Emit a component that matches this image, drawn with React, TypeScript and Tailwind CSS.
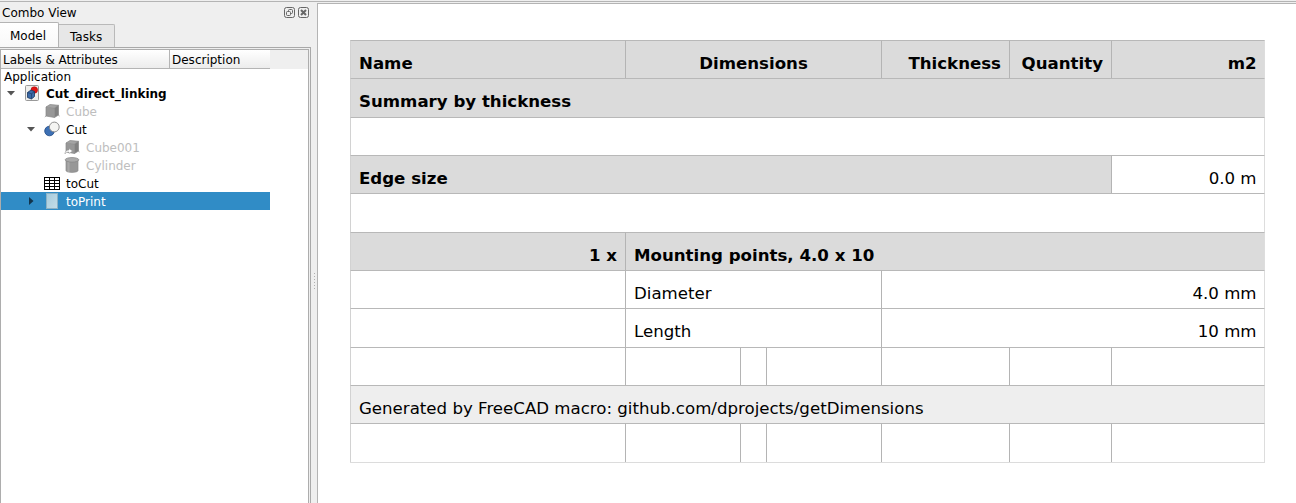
import type { ReactNode } from "react";

type Cell = { w: string; text?: string; cls?: string };
type Row = { h: string; cls: string; cells: Cell[] };

const head = "bg-[#dbdbdb] font-bold";
const plain = "bg-white";
const foot = "bg-[#eeeeee] border-b border-b-[#dedede]";

const emptyCells: Cell[] = [
  { w: "w-[275px]" },
  { w: "w-[115px]" },
  { w: "w-[26px]" },
  { w: "w-[115px]" },
  { w: "w-[128px]" },
  { w: "w-[102px]" },
  { w: "w-[154px]" },
];

const rows: Row[] = [
  {
    h: "h-[38px]",
    cls: head,
    cells: [
      { w: "w-[275px]", text: "Name" },
      { w: "w-[256px]", text: "Dimensions", cls: "justify-center" },
      { w: "w-[128px]", text: "Thickness", cls: "justify-end" },
      { w: "w-[102px]", text: "Quantity", cls: "justify-end" },
      { w: "w-[154px]", text: "m2", cls: "justify-end" },
    ],
  },
  { h: "h-[39px]", cls: head, cells: [{ w: "w-[915px]", text: "Summary by thickness" }] },
  { h: "h-[38px]", cls: plain, cells: [{ w: "w-[915px]" }] },
  {
    h: "h-[38px]",
    cls: plain,
    cells: [
      { w: "w-[761px]", text: "Edge size", cls: "bg-[#dbdbdb] font-bold" },
      { w: "w-[154px]", text: "0.0 m", cls: "justify-end" },
    ],
  },
  { h: "h-[39px]", cls: plain, cells: [{ w: "w-[915px]" }] },
  {
    h: "h-[38px]",
    cls: head,
    cells: [
      { w: "w-[275px]", text: "1 x", cls: "justify-end" },
      { w: "w-[640px]", text: "Mounting points, 4.0 x 10" },
    ],
  },
  {
    h: "h-[38px]",
    cls: plain,
    cells: [
      { w: "w-[275px]" },
      { w: "w-[256px]", text: "Diameter" },
      { w: "w-[384px]", text: "4.0 mm", cls: "justify-end" },
    ],
  },
  {
    h: "h-[39px]",
    cls: plain,
    cells: [
      { w: "w-[275px]" },
      { w: "w-[256px]", text: "Length" },
      { w: "w-[384px]", text: "10 mm", cls: "justify-end" },
    ],
  },
  { h: "h-[38px]", cls: plain, cells: emptyCells },
  {
    h: "h-[39px]",
    cls: foot,
    cells: [{ w: "w-[915px]", text: "Generated by FreeCAD macro: github.com/dprojects/getDimensions" }],
  },
  { h: "h-[40px] -mt-px", cls: "border-b border-b-[#dcdcdc]", cells: emptyCells },
];

function Report() {
  return (
    <div className="w-[915px] text-[16.61px] leading-[20px] text-black">
      {rows.map((row, i) => (
        <div key={i} className={`flex ${row.h} ${row.cls}`}>
          {row.cells.map((c, j) => {
            const last = j === row.cells.length - 1;
            return (
              <div
                key={j}
                className={`flex items-start whitespace-nowrap border-t border-l border-t-[#b8b8b8] pt-[13px] pl-2 ${c.w} ${c.cls ?? ""} ${
                  j === 0 ? "border-l-[#d2d2d2]" : "border-l-[#b4b4b4]"
                } ${last ? "border-r border-r-[#dddddd] pr-[7.5px]" : "pr-2"}`}
              >
                {c.text}
              </div>
            );
          })}
        </div>
      ))}
    </div>
  );
}

function DocIcon() {
  return (
    <svg width="16" height="16" viewBox="0 0 16 16">
      <rect x="1.5" y="0.5" width="13" height="15" rx="1" fill="#eeeeec" stroke="#999" />
      <circle cx="10.300" cy="5" r="3.300" fill="#e01515" stroke="#a40000" strokeWidth=".5" />
      <path d="M3.500 7.500 7 5l3.500 1.500v5L7.500 14l-4-1.500z" fill="#3b6aa8" stroke="#17365f" strokeWidth=".8" />
      <path d="m3.500 7.500 4 1.300 3-2.300M7.500 8.800V14" fill="none" stroke="#17365f" strokeWidth=".6" />
    </svg>
  );
}

function CubeIcon({ link = false }: { link?: boolean }) {
  return (
    <svg width="16" height="16" viewBox="0 0 16 16">
      <path d="M2 4 6 1.500l8.500.8L11 5z" fill="#a4a4a4" />
      <path d="M2 4 10.500 5v9.500L2 13z" fill="#979797" />
      <path d="M10.500 5 14.500 2.300V12l-4 2.500z" fill="#808080" />
      <path d="M2 4 6 1.500l8.500.8V12l-4 2.500L2 13zM2 4l8.500 1 4-2.700M10.500 5v9.500M2 13l-1.200 1M14.500 12l.8 1.300" fill="none" stroke="#868686" strokeWidth=".7" />
      {link && <path d="M1 15c0-3 2-4 4-4V9.500L8.500 12 5 14.500V13c-2 0-3 .5-4 2z" fill="#fff" stroke="#999" strokeWidth=".5" />}
    </svg>
  );
}

function CutIcon() {
  return (
    <svg width="16" height="16" viewBox="0 0 16 16">
      <circle cx="5.500" cy="10" r="4.800" fill="#3d70b4" stroke="#204a87" strokeWidth=".8" />
      <circle cx="10.300" cy="6" r="4.900" fill="#f5f5f3" stroke="#858585" strokeWidth=".9" />
    </svg>
  );
}

function CylinderIcon() {
  return (
    <svg width="16" height="16" viewBox="0 0 16 16">
      <path d="M2 3v10.500c0 2.500 12 2.500 12 0V3z" fill="#979797" stroke="#8a8a8a" strokeWidth=".7" />
      <path d="M4.500 5v10" stroke="#a8a8a8" strokeWidth="2" />
      <ellipse cx="8" cy="2.800" rx="6.800" ry="2.300" fill="#aaaaaa" stroke="#858585" strokeWidth=".7" />
    </svg>
  );
}

function SheetIcon() {
  return (
    <svg width="16" height="16" viewBox="0 0 16 16" shapeRendering="crispEdges">
      <rect x="0" y="2" width="16" height="13" fill="#000" />
      <g fill="#fff">
        {[3, 6, 9, 12].map((y) =>
          [1, 6, 11].map((x) => <rect key={`${x}-${y}`} x={x} y={y} width="4" height="2" />),
        )}
      </g>
    </svg>
  );
}

function PageIcon() {
  return (
    <svg width="16" height="16" viewBox="0 0 16 16">
      <defs>
        <linearGradient id="page" x1="0" y1="0" x2="1" y2="1">
          <stop offset="0" stopColor="#a5cbdd" />
          <stop offset="1" stopColor="#c4dde7" />
        </linearGradient>
      </defs>
      <rect x="2.500" y="0.500" width="11" height="15" fill="url(#page)" stroke="#8bb1c4" />
    </svg>
  );
}

function Arrow({ open }: { open: boolean }) {
  return (
    <svg width="10" height="10" viewBox="0 0 10 10">
      <path d={open ? "M1 3h8L5 7.500z" : "M3 1v8l4.500-4z"} fill={open ? "#555" : "#12344c"} />
    </svg>
  );
}

function TreeRow({ pad, arrow, icon, label, cls = "" }: { pad: string; arrow?: "open" | "closed"; icon: ReactNode; label: string; cls?: string }) {
  return (
    <div className={`flex h-[18px] w-[269px] items-center ${pad} ${cls}`}>
      <span className="flex w-[18px] shrink-0">{arrow && <Arrow open={arrow === "open"} />}</span>
      <span className="mr-[6px] shrink-0">{icon}</span>
      <span className="whitespace-nowrap pt-[2px]">{label}</span>
    </div>
  );
}

function DockButtons() {
  return (
    <svg width="26" height="12" viewBox="0 0 26 12" fill="none" stroke="#666">
      <rect x=".5" y=".5" width="10" height="10" rx="2" />
      <rect x="4.500" y="2.500" width="4" height="4" rx="1" />
      <rect x="2.500" y="4.500" width="4" height="4" rx="1" fill="#efefef" />
      <rect x="14.500" y=".5" width="10" height="10" rx="2" />
      <path d="m17 3 5 5m0-5-5 5" strokeWidth="2" />
    </svg>
  );
}

export default function App() {
  return (
    <div className="flex h-[503px] w-[1296px] flex-col overflow-hidden bg-[#efefef] font-['DejaVu_Sans',sans-serif] text-[12px] leading-[16px] text-black">
      <div className="mt-px h-px shrink-0 bg-[#b4b4b4]" />
      <div className="flex min-h-0 flex-1">
        <aside className="flex w-[311px] shrink-0 flex-col">
          <div className="flex h-[20px] items-start justify-between pt-[3px] pr-px pl-[2px]">
            <span>Combo View</span>
            <span className="pt-[2px]"><DockButtons /></span>
          </div>
          <div className="flex h-[25px] items-end">
            <div className="h-[25px] w-[59px] rounded-tr-[2px] border-t border-r border-[#b4b4b4] bg-linear-to-b from-white to-[#f8f8f8] pt-[5px] pl-[10px]">Model</div>
            <div className="h-[23px] w-[56px] rounded-tr-[2px] border-t border-r border-[#b9b9b9] bg-[#e7e7e7] pt-[4px] pl-[11px]">Tasks</div>
          </div>
          <div className="min-h-0 flex-1 border-t border-r border-[#a9a9a9] pt-px pr-px">
            <div className="h-full border-t border-r border-l border-[#adadad] bg-white">
              <div className="flex h-[19px] bg-[#efefef]">
                <div className="h-[19px] w-[169px] border-r border-b border-[#b4b4b4] bg-linear-to-b from-white to-[#ececec] pt-[2px] pl-[2px]">Labels &amp; Attributes</div>
                <div className="h-[19px] w-[100px] border-b border-[#b4b4b4] bg-linear-to-b from-white to-[#ececec] pt-[2px] pl-[2px]">Description</div>
              </div>
              <div className="h-[15px] pl-[3px] leading-[17px]">Application</div>
              <TreeRow pad="pl-[5px]" arrow="open" icon={<DocIcon />} label="Cut_direct_linking" cls="font-bold" />
              <TreeRow pad="pl-[25px]" icon={<CubeIcon />} label="Cube" cls="text-[#bebebe]" />
              <TreeRow pad="pl-[25px]" arrow="open" icon={<CutIcon />} label="Cut" />
              <TreeRow pad="pl-[45px]" icon={<CubeIcon link />} label="Cube001" cls="text-[#bebebe]" />
              <TreeRow pad="pl-[45px]" icon={<CylinderIcon />} label="Cylinder" cls="text-[#bebebe]" />
              <TreeRow pad="pl-[25px]" icon={<SheetIcon />} label="toCut" />
              <TreeRow pad="pl-[25px]" arrow="closed" icon={<PageIcon />} label="toPrint" cls="bg-[#308cc6] text-white" />
            </div>
          </div>
        </aside>
        <div className="flex w-[6px] shrink-0 flex-col items-center gap-[2px] pt-[271px]">
          {[0, 1, 2, 3, 4, 5].map((n) => (
            <span key={n} className="h-px w-px bg-[#b0b0b0]" />
          ))}
        </div>
        <main className="mt-px flex-1 border-t border-l border-[#b4b4b4] bg-white pt-[36px] pl-[32px]">
          <Report />
        </main>
      </div>
    </div>
  );
}
